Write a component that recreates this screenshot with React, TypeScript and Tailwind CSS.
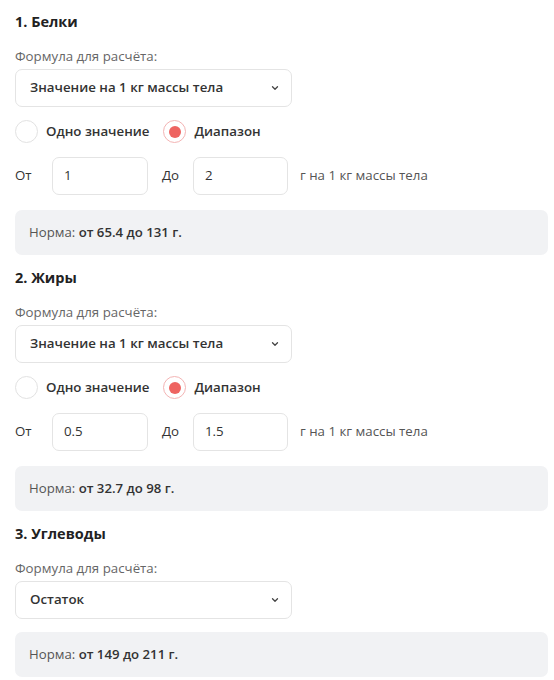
import React from "react";

const font = { fontFamily: '"Open Sans", "Noto Sans", sans-serif' };

function Chevron() {
  return (
    <svg width="10" height="10" viewBox="0 0 10 10" fill="none">
      <path d="M2.5 3.8 L5 6.3 L7.5 3.8" stroke="#444" strokeWidth="1.3" strokeLinecap="round" strokeLinejoin="round" />
    </svg>
  );
}

function Select({ value }: { value: string }) {
  return (
    <div className="mt-[3px] flex h-[38px] w-[277px] items-center justify-between rounded-[7px] border border-[#e4e4e4] bg-white pl-[14px] pr-[11px]">
      <span className="text-[13.3px] font-semibold text-[#333]">{value}</span>
      <Chevron />
    </div>
  );
}

function Radio({ checked, label }: { checked: boolean; label: string }) {
  return (
    <div className="flex items-center">
      <div
        className={
          checked
            ? "flex h-[23px] w-[23px] items-center justify-center rounded-full border border-[#f3b4b4] bg-white"
            : "h-[23px] w-[23px] rounded-full border border-[#e2e2e2] bg-white"
        }
      >
        {checked && <div className="h-[12px] w-[12px] rounded-full bg-[#ee6461]" />}
      </div>
      <span className="ml-[8px] text-[13.3px] font-semibold text-[#333]">{label}</span>
    </div>
  );
}

function Input({ value, w }: { value: string; w: string }) {
  return (
    <div className={"flex h-[38px] items-center rounded-[7px] border border-[#e4e4e4] bg-white pl-[11px] text-[13.3px] text-[#333] " + w}>
      {value}
    </div>
  );
}

function Norma({ from, to }: { from: string; to: string }) {
  return (
    <div className="flex h-[45px] w-[533px] items-center rounded-[7px] bg-[#f1f2f4] pl-[14px] text-[13.2px] text-[#555]">
      Норма:&nbsp;<span className="font-semibold text-[#333]">от {from} до {to} г.</span>
    </div>
  );
}

function Section({
  title,
  formula,
  range,
  from,
  to,
  nFrom,
  nTo,
}: {
  title: string;
  formula: string;
  range: boolean;
  from?: string;
  to?: string;
  nFrom: string;
  nTo: string;
}) {
  return (
    <div className="flex flex-col">
      <div className="h-[20px] text-[14.5px] font-bold leading-[20px] text-[#222]">{title}</div>
      <div className="mt-[14px] h-[20px] text-[13.3px] leading-[20px] text-[#666]">Формула для расчёта:</div>
      <Select value={formula} />
      {range && (
        <>
          <div className="mt-[13px] flex items-center">
            <Radio checked={false} label="Одно значение" />
            <div className="ml-[14px]">
              <Radio checked={true} label="Диапазон" />
            </div>
          </div>
          <div className="mt-[14px] flex items-center">
            <span className="w-[37px] text-[13.3px] text-[#333]">От</span>
            <Input value={from!} w="w-[96px]" />
            <span className="ml-[14px] w-[31px] text-[13.3px] text-[#333]">До</span>
            <Input value={to!} w="w-[95px]" />
            <span className="ml-[12px] text-[13.3px] text-[#555]">г на 1 кг массы тела</span>
          </div>
          <div className="mt-[15px]">
            <Norma from={nFrom} to={nTo} />
          </div>
        </>
      )}
      {!range && (
        <div className="mt-[13px]">
          <Norma from={nFrom} to={nTo} />
        </div>
      )}
    </div>
  );
}

export default function App() {
  return (
    <div className="min-h-[680px] w-[554px] bg-white" style={font}>
      <div className="flex flex-col gap-[13px] px-[15px] pt-[12px]">
        <Section title="1. Белки" formula="Значение на 1 кг массы тела" range from="1" to="2" nFrom="65.4" nTo="131" />
        <Section title="2. Жиры" formula="Значение на 1 кг массы тела" range from="0.5" to="1.5" nFrom="32.7" nTo="98" />
        <Section title="3. Углеводы" formula="Остаток" range={false} nFrom="149" nTo="211" />
      </div>
    </div>
  );
}
